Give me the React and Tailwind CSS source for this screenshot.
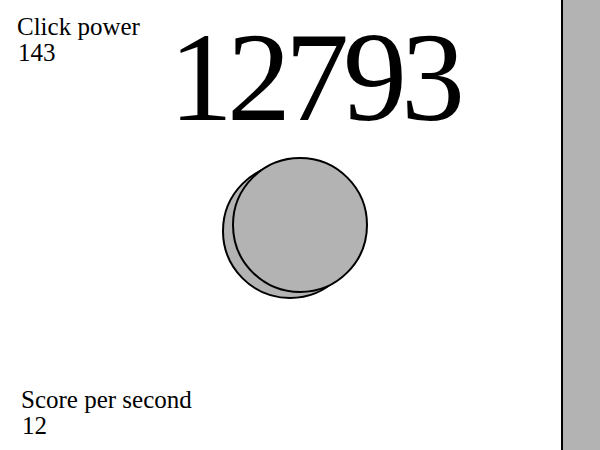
export default function App() {
  return (
    <div className="flex h-[450px] w-[600px] overflow-hidden bg-white font-['Liberation_Serif'] text-black">
      <div className="flex flex-1 flex-col">
        <div className="flex">
          <div className="w-[169px] shrink-0 pl-[17px] pt-[14px] text-[25px] leading-[26px]">
            <div>Click power</div>
            <div className="pl-[1px]">143</div>
          </div>
          <div className="pt-[13px] text-[128px] leading-[128px] tracking-[-6px]">12793</div>
        </div>
        <div className="ml-[222px] mt-[16px]">
          <div className="relative h-[142px] w-[146px]">
            <div className="absolute bottom-0 left-0 h-[136px] w-[136px] rounded-full border-2 border-black bg-[#b3b3b3]" />
            <div className="absolute right-0 top-0 h-[136px] w-[136px] rounded-full border-2 border-black bg-[#b3b3b3]" />
          </div>
        </div>
        <div className="flex-1" />
        <div className="pb-[11px] pl-[21px] text-[25px] leading-[26px]">
          <div>Score per second</div>
          <div className="pl-[1px]">12</div>
        </div>
      </div>
      <div className="h-full w-[39px] shrink-0 border-l-2 border-black bg-[#b3b3b3]" />
    </div>
  );
}
